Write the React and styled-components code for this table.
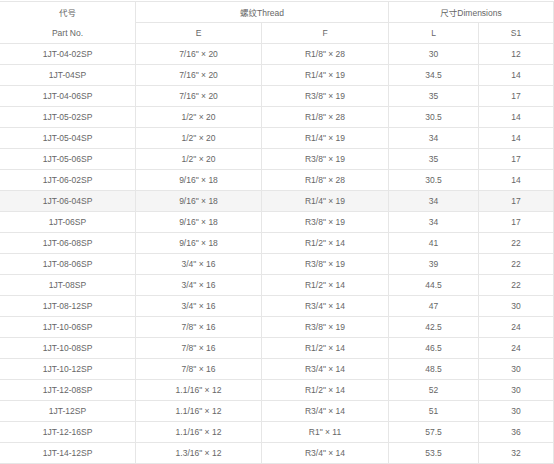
import React from 'react';
import styled, { createGlobalStyle } from 'styled-components';

const Global = createGlobalStyle`
  html, body {
    margin: 0;
    padding: 0;
    background: #fff;
  }
  body {
    font-family: 'Liberation Sans', Arial, 'Noto Sans CJK SC', sans-serif;
  }
`;

const Wrap = styled.div`
  width: 554px;
  height: 464px;
  overflow: hidden;
  padding-top: 1px;
  box-sizing: border-box;
`;

const Table = styled.table`
  border-collapse: collapse;
  table-layout: fixed;
  width: 554px;
  margin-left: -1px;
  color: #666;
  font-size: 8.5px;
`;

const Cell = styled.td`
  height: 20px;
  padding: 0;
  border: 1px solid #e6e6e6;
  text-align: center;
  vertical-align: middle;
  white-space: nowrap;
  border-bottom-color: ${(p) => (p.$open ? 'transparent' : '#e6e6e6')};
`;

const Row = styled.tr`
  background: ${(p) => (p.$hover ? '#f5f5f5' : '#fff')};
`;

const rows = [
  ['1JT-04-02SP', '7/16" × 20', 'R1/8" × 28', '30', '12'],
  ['1JT-04SP', '7/16" × 20', 'R1/4" × 19', '34.5', '14'],
  ['1JT-04-06SP', '7/16" × 20', 'R3/8" × 19', '35', '17'],
  ['1JT-05-02SP', '1/2" × 20', 'R1/8" × 28', '30.5', '14'],
  ['1JT-05-04SP', '1/2" × 20', 'R1/4" × 19', '34', '14'],
  ['1JT-05-06SP', '1/2" × 20', 'R3/8" × 19', '35', '17'],
  ['1JT-06-02SP', '9/16" × 18', 'R1/8" × 28', '30.5', '14'],
  ['1JT-06-04SP', '9/16" × 18', 'R1/4" × 19', '34', '17'],
  ['1JT-06SP', '9/16" × 18', 'R3/8" × 19', '34', '17'],
  ['1JT-06-08SP', '9/16" × 18', 'R1/2" × 14', '41', '22'],
  ['1JT-08-06SP', '3/4" × 16', 'R3/8" × 19', '39', '22'],
  ['1JT-08SP', '3/4" × 16', 'R1/2" × 14', '44.5', '22'],
  ['1JT-08-12SP', '3/4" × 16', 'R3/4" × 14', '47', '30'],
  ['1JT-10-06SP', '7/8" × 16', 'R3/8" × 19', '42.5', '24'],
  ['1JT-10-08SP', '7/8" × 16', 'R1/2" × 14', '46.5', '24'],
  ['1JT-10-12SP', '7/8" × 16', 'R3/4" × 14', '48.5', '30'],
  ['1JT-12-08SP', '1.1/16" × 12', 'R1/2" × 14', '52', '30'],
  ['1JT-12SP', '1.1/16" × 12', 'R3/4" × 14', '51', '30'],
  ['1JT-12-16SP', '1.1/16" × 12', 'R1" × 11', '57.5', '36'],
  ['1JT-14-12SP', '1.3/16" × 12', 'R3/4" × 14', '53.5', '32'],
];

export default function App() {
  return (
    <Wrap>
      <Global />
      <Table>
        <colgroup>
          <col style={{ width: 136 }} />
          <col style={{ width: 126 }} />
          <col style={{ width: 127 }} />
          <col style={{ width: 90 }} />
          <col style={{ width: 75 }} />
        </colgroup>
        <tbody>
          <Row>
            <Cell $open>代号</Cell>
            <Cell colSpan={2}>螺纹Thread</Cell>
            <Cell colSpan={2}>尺寸Dimensions</Cell>
          </Row>
          <Row>
            <Cell>Part No.</Cell>
            <Cell>E</Cell>
            <Cell>F</Cell>
            <Cell>L</Cell>
            <Cell>S1</Cell>
          </Row>
          {rows.map((r, i) => (
            <Row key={r[0]} $hover={i === 7}>
              {r.map((v, j) => (
                <Cell key={j}>{v}</Cell>
              ))}
            </Row>
          ))}
        </tbody>
      </Table>
    </Wrap>
  );
}
